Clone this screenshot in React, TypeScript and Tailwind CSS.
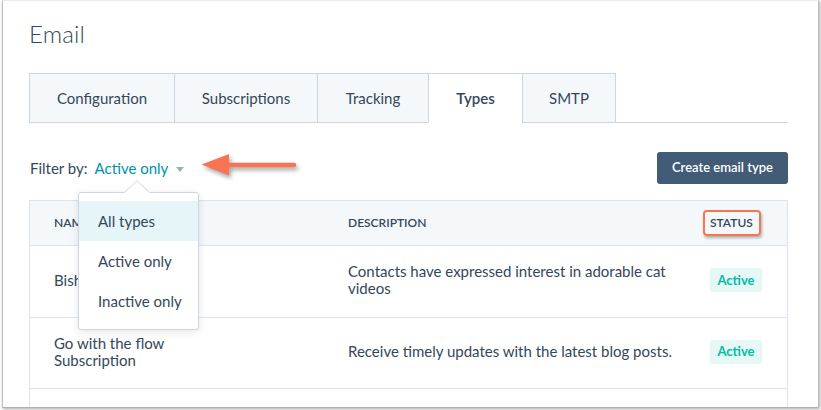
import * as React from 'react'

const tabs = [
  { label: 'Configuration', w: 'w-[145px]' },
  { label: 'Subscriptions', w: 'w-[143px]' },
  { label: 'Tracking', w: 'w-[111px]' },
  { label: 'Types', w: 'w-[94px]', active: true },
  { label: 'SMTP', w: 'w-[94px]', last: true },
]

const rows = [
  {
    name: ['Bishop Subscription'],
    desc: ['Contacts have expressed interest in adorable cat', 'videos'],
    h: 'h-[72px]',
  },
  {
    name: ['Go with the flow', 'Subscription'],
    desc: ['Receive timely updates with the latest blog posts.'],
    h: 'h-[71px]',
  },
]

const ActiveBadge = () => (
  <span className="inline-flex h-[24px] w-[52px] items-center justify-center rounded-[3px] bg-[#e5f8f6] text-[13px] font-bold text-[#00bda5]">
    Active
  </span>
)

export default function App() {
  return (
    <div
      className="relative h-[410px] w-[821px] overflow-hidden bg-white text-[#33475b]"
      style={{ fontFamily: 'Lato, "Noto Sans", sans-serif' }}
    >
      {/* window frame */}
      <div className="ml-[2px] h-[408px] w-[817px] overflow-hidden border-x border-b border-t border-x-[#bfbfbf] border-b-[#b0b0b0] border-t-[#ececec] bg-white pl-[26px] pr-[30px] pt-[17px] shadow-[1px_1px_3px_rgba(0,0,0,0.35)]">
        <h1 className="text-[24px] font-light leading-[32px] tracking-[0.2px]">Email</h1>

        {/* tabs */}
        <div className="mt-[23px] flex border-b border-[#cbd6e2]">
          {tabs.map((t) => (
            <div
              key={t.label}
              className={`-mb-px flex h-[50px] items-center justify-center border-l border-t border-[#cbd6e2] text-[15px] ${t.w} ${
                t.last ? 'border-r' : ''
              } ${t.active ? 'border-b border-b-white bg-white font-semibold' : 'border-b bg-[#f5f8fa]'}`}
            >
              {t.label}
            </div>
          ))}
        </div>

        {/* filter row */}
        <div className="mt-[29px] flex h-[32px] items-center justify-between">
          <div className="flex items-center pl-[1px] pt-[1px] text-[15px]">
            <span>Filter by:</span>
            <span className="ml-[7px] text-[#0091ae]">Active only</span>
            <span className="ml-[8px] mt-[1px] h-0 w-0 border-x-[4px] border-t-[5px] border-x-transparent border-t-[#99afc4]" />
          </div>
          <button className="h-[32px] w-[131px] rounded-[3px] bg-[#425b76] text-[13px] font-semibold text-white">
            Create email type
          </button>
        </div>

        {/* table */}
        <div className="mt-[16px] border-x border-t border-[#dfe3eb]">
          <div className="grid h-[45px] grid-cols-[318px_362px_1fr] items-center border-b border-[#dfe3eb] bg-[#f5f8fa] text-[12px] font-semibold uppercase">
            <div className="pl-[24px]">Name</div>
            <div>Description</div>
            <div>
              <span className="relative inline-block leading-[16px]">
                Status
                <span className="absolute -bottom-[5px] -left-[7px] -right-[8px] -top-[5px] rounded-[4px] border-[2.5px] border-[#f8764f] shadow-[1px_2px_3px_rgba(0,0,0,0.3)]" />
              </span>
            </div>
          </div>
          {rows.map((r, i) => (
            <div
              key={i}
              className={`grid grid-cols-[318px_362px_1fr] items-center border-b border-[#dfe3eb] pb-[3px] text-[15px] leading-[17px] ${r.h}`}
            >
              <div className="pl-[24px]">
                {r.name.map((l) => (
                  <div key={l}>{l}</div>
                ))}
              </div>
              <div>
                {r.desc.map((l) => (
                  <div key={l}>{l}</div>
                ))}
              </div>
              <div>
                <ActiveBadge />
              </div>
            </div>
          ))}
          <div className="h-[40px]" />
        </div>
      </div>

      {/* filter dropdown */}
      <div className="absolute left-[78px] top-[192px] h-[138px] w-[121px] rounded-[3px] border border-[#cbd6e2] bg-white pt-[8px] text-[15px] shadow-[0_2px_8px_rgba(0,0,0,0.1)]">
        <div className="flex h-[40px] items-center bg-[#e5f5f8] pl-[19px]">All types</div>
        <div className="flex h-[40px] items-center pl-[19px]">Active only</div>
        <div className="flex h-[40px] items-center pl-[19px]">Inactive only</div>
      </div>
      <svg className="absolute left-[124px] top-[180px]" width="26" height="13" viewBox="0 0 26 13">
        <polygon points="0,13 13,0.8 26,13" fill="white" />
        <polyline points="0.5,12.5 13,0.8 25.5,12.5" fill="none" stroke="#cbd6e2" strokeWidth="1" />
      </svg>

      {/* annotation arrow */}
      <svg
        className="absolute left-[196px] top-[150px] drop-shadow-[2px_3px_2px_rgba(0,0,0,0.35)]"
        width="110"
        height="34"
        viewBox="0 0 110 34"
      >
        <line x1="30" y1="15" x2="98" y2="15" stroke="#f97452" strokeWidth="4.5" strokeLinecap="round" />
        <polygon points="5.5,14.5 33,4 33,25.5" fill="#f97452" />
      </svg>
    </div>
  )
}
